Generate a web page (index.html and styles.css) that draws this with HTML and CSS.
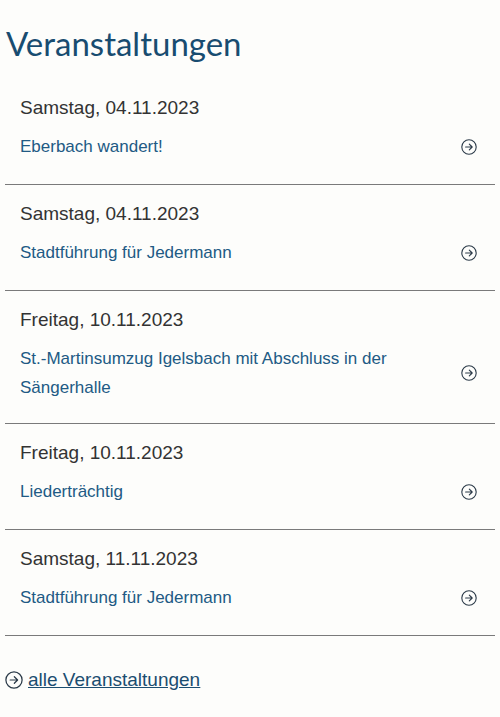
FILE: index.html
```html
<!DOCTYPE html>
<html lang="de">
<head>
    <meta charset="UTF-8">
    <title>Veranstaltungen</title>
    <link rel="stylesheet" href="styles.css">
</head>
<body>
    <div class="events">
        <h1>Veranstaltungen</h1>
        <ul class="event-list">
            <li class="event">
                <div class="event-date">Samstag, 04.11.2023</div>
                <a class="event-link" href="#">
                    <span class="event-title">Eberbach wandert!</span>
                    <svg class="arrow" viewBox="0 0 16 16"><circle cx="8" cy="8" r="7.2"/><path d="M4.6 8h6.6M8.3 5.1 11.2 8 8.3 10.9"/></svg>
                </a>
            </li>
            <li class="event">
                <div class="event-date">Samstag, 04.11.2023</div>
                <a class="event-link" href="#">
                    <span class="event-title">Stadtführung für Jedermann</span>
                    <svg class="arrow" viewBox="0 0 16 16"><circle cx="8" cy="8" r="7.2"/><path d="M4.6 8h6.6M8.3 5.1 11.2 8 8.3 10.9"/></svg>
                </a>
            </li>
            <li class="event event-long">
                <div class="event-date">Freitag, 10.11.2023</div>
                <a class="event-link" href="#">
                    <span class="event-title">St.-Martinsumzug Igelsbach mit Abschluss in der Sängerhalle</span>
                    <svg class="arrow" viewBox="0 0 16 16"><circle cx="8" cy="8" r="7.2"/><path d="M4.6 8h6.6M8.3 5.1 11.2 8 8.3 10.9"/></svg>
                </a>
            </li>
            <li class="event">
                <div class="event-date">Freitag, 10.11.2023</div>
                <a class="event-link" href="#">
                    <span class="event-title">Liederträchtig</span>
                    <svg class="arrow" viewBox="0 0 16 16"><circle cx="8" cy="8" r="7.2"/><path d="M4.6 8h6.6M8.3 5.1 11.2 8 8.3 10.9"/></svg>
                </a>
            </li>
            <li class="event">
                <div class="event-date">Samstag, 11.11.2023</div>
                <a class="event-link" href="#">
                    <span class="event-title">Stadtführung für Jedermann</span>
                    <svg class="arrow" viewBox="0 0 16 16"><circle cx="8" cy="8" r="7.2"/><path d="M4.6 8h6.6M8.3 5.1 11.2 8 8.3 10.9"/></svg>
                </a>
            </li>
        </ul>
        <a class="all-link" href="#">
            <svg class="arrow arrow-big" viewBox="0 0 16 16"><circle cx="8" cy="8" r="7.2"/><path d="M4.6 8h6.6M8.3 5.1 11.2 8 8.3 10.9"/></svg>
            <span>alle Veranstaltungen</span>
        </a>
    </div>
</body>
</html>
```

FILE: styles.css
```css
body {
    margin: 0;
    background-color: #fdfdfb;
    font-family: "Liberation Sans", Arial, sans-serif;
}
.events {
    padding: 0 5px;
}
h1 {
    margin: 0;
    padding: 23px 0 0 1px;
    height: 79px;
    box-sizing: border-box;
    font-family: Lato, "Liberation Sans", sans-serif;
    font-weight: 400;
    font-size: 33px;
    line-height: 40px;
    color: #184c70;
}
.event-list {
    list-style: none;
    margin: 0;
    padding: 0;
}
.event {
    box-sizing: border-box;
    padding: 16px 15px 0 15px;
    height: 106px;
    border-bottom: 1px solid #7a7a7a;
}
.event-long {
    height: 133px;
}
.event-date {
    font-size: 19px;
    line-height: 26px;
    color: #333;
}
.event-link {
    display: flex;
    align-items: center;
    justify-content: space-between;
    margin-top: 11px;
    text-decoration: none;
    color: #215a84;
}
.event-title {
    max-width: 410px;
    font-size: 17px;
    line-height: 29px;
}
.arrow {
    flex: none;
    width: 16px;
    height: 16px;
    margin-right: 3px;
    fill: none;
    stroke: #2b3a48;
    stroke-width: 1.1;
    stroke-linecap: round;
    stroke-linejoin: round;
}
.all-link {
    display: inline-flex;
    align-items: center;
    gap: 5px;
    margin-top: 31px;
    font-size: 19px;
    line-height: 26px;
    color: #1b4d70;
}
.all-link span {
    text-decoration: underline;
}
.arrow-big {
    width: 18px;
    height: 18px;
    margin-right: 0;
}
```
